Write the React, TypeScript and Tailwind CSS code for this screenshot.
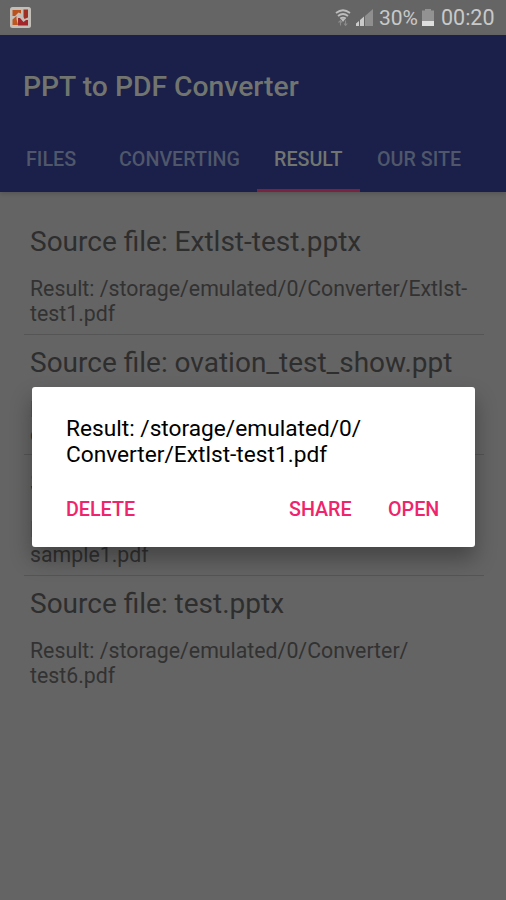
interface ResultItem {
    id: number;
    source: string;
    lines: string[];
}

const TABS = [
    { label: "FILES", className: "w-[101px] pl-[26px]" },
    { label: "CONVERTING", className: "w-[156px] pl-[18px]" },
    { label: "RESULT", className: "w-[103px] pl-[17px]" },
    { label: "OUR SITE", className: "w-[146px] pl-[17px]" },
];

const RESULTS: ResultItem[] = [
    { id: 1, source: "Extlst-test.pptx", lines: ["/storage/emulated/0/Converter/Extlst-", "test1.pdf"] },
    { id: 2, source: "ovation_test_show.ppt", lines: ["/storage/emulated/0/Converter/", "ovation_test_show1.pdf"] },
    { id: 3, source: "sample.pptx", lines: ["/storage/emulated/0/Converter/", "sample1.pdf"] },
    { id: 4, source: "test.pptx", lines: ["/storage/emulated/0/Converter/", "test6.pdf"] },
];

function AppIcon() {
    return (
        <svg className="ml-[10px] h-[21px] w-[21px]" viewBox="0 0 21 21">
            <rect width="21" height="21" rx="2.500" fill="#c4beb9" />
            <path d="M2.500 3h8.500v3.500L8.500 5.500 5 9H2.500z" fill="#b9521c" />
            <path d="M2.500 12.500l4-3.500v3l1.500 6H2.500z" fill="#bd5720" />
            <path d="M13.500 2.500h4.500v8l-3.500 1.500-1-2z" fill="#a03024" />
            <path d="M8 11l2 0 3.500 4 2.500-2h2v5.500H8z" fill="#a3262a" />
        </svg>
    );
}

function WifiIcon() {
    return (
        <svg className="h-[20px] w-[16px]" viewBox="0 0 16 20" fill="none">
            <path d="M1 5Q8-.5 15 5M3 8Q8 4 13 8M5.200 10.500Q8 8.600 10.800 10.500" stroke="#bdbdbd" strokeWidth="1.8" />
            <path d="M5.500 10.500h5L8 14z" fill="#bdbdbd" />
            <path d="M5.500 17.500v-5M3.500 14.500l2-2 1.500 2M10.500 12.500v5M9 15.500l1.500 2 1.800-2" stroke="#8b8b8b" strokeWidth="1.1" />
        </svg>
    );
}

function SignalIcon() {
    return (
        <svg className="h-[17px] w-[17px]" viewBox="0 0 17 17">
            <path d="M0 17v-2.500L3 12v5zM4 17v-6l4-3.500V17z" fill="#cacaca" />
            <path d="M9 17V7l8-7v17z" fill="#8f8f8f" />
        </svg>
    );
}

function BatteryIcon() {
    return (
        <svg className="h-[17px] w-[12px]" viewBox="0 0 12 17">
            <path d="M3 0h6v1.500h3V12H0V1.500h3z" fill="#929292" />
            <path d="M0 12h12v5H0z" fill="#dedede" />
        </svg>
    );
}

function StatusBar() {
    return (
        <div className="flex h-[35px] items-center bg-[#656565]">
            <AppIcon />
            <div className="ml-auto flex items-center pr-[11px] text-[#c9c9c9]">
                <WifiIcon />
                <div className="ml-[5px]"><SignalIcon /></div>
                <span className="ml-[6px] mt-px w-[43px] text-[21px] leading-none">30%</span>
                <BatteryIcon />
                <span className="ml-[7px] mt-px w-[54px] text-[21.500px] leading-none">00:20</span>
            </div>
        </div>
    );
}

function ResultRow({ item, last }: { item: ResultItem; last: boolean }) {
    return (
        <div className={`h-[120.6px] pl-[6px] pt-[11px] ${last ? "" : "border-b border-[#555555]"}`}>
            <div className="text-[28px] leading-[34px] text-[#2e2e2e]">Source file: {item.source}</div>
            <div className="mt-[17px] text-[21.3px] leading-[25px] text-[#323232]">
                <div>Result: {item.lines[0]}</div>
                <div>{item.lines[1]}</div>
            </div>
        </div>
    );
}

function ResultDialog() {
    return (
        <div className="absolute left-[32px] top-[387px] h-[160px] w-[443px] rounded-[3px] bg-white pl-[34px] pt-[29px] shadow-[0_12px_22px_rgba(0,0,0,0.32)]">
            <div className="text-[22.7px] leading-[26px] text-black">
                <div>Result: /storage/emulated/0/</div>
                <div>Converter/Extlst-test1.pdf</div>
            </div>
            <div className="mt-[29px] flex text-[19.700px] font-medium leading-[26px] text-[#f0246c]">
                <button className="w-[223px] text-left">DELETE</button>
                <button className="w-[99px] text-left">SHARE</button>
                <button>OPEN</button>
            </div>
        </div>
    );
}

export default function App() {
    return (
        <div className="relative h-[900px] w-[506px] overflow-hidden bg-[#646464] font-[Roboto,sans-serif]">
            <StatusBar />

            {/* Toolbar and tabs */}
            <div className="flex h-[157px] flex-col bg-[#1a204a] shadow-[0_2px_4px_rgba(0,0,0,0.15)]">
                <h1 className="pl-[23px] pt-[35px] text-[28.3px] font-medium leading-[34px] text-[#72756f]">
                    PPT to PDF Converter
                </h1>
                <div className="mt-auto flex h-[65px] text-[19.700px] font-medium leading-[59px]">
                    {TABS.map((tab) => (
                        <button
                            key={tab.label}
                            className={`border-b-[3px] pt-[3px] text-left ${tab.className} ${
                                tab.label === "RESULT" ? "border-[#78233f] text-[#72756f]" : "border-transparent text-[#50576a]"
                            }`}
                        >
                            {tab.label}
                        </button>
                    ))}
                </div>
            </div>

            {/* Converted files */}
            <div className="ml-6 w-[460px] pt-[22px]">
                {RESULTS.map((item, index) => (
                    <ResultRow key={item.id} item={item} last={index === RESULTS.length - 1} />
                ))}
            </div>

            <ResultDialog />
        </div>
    );
}
